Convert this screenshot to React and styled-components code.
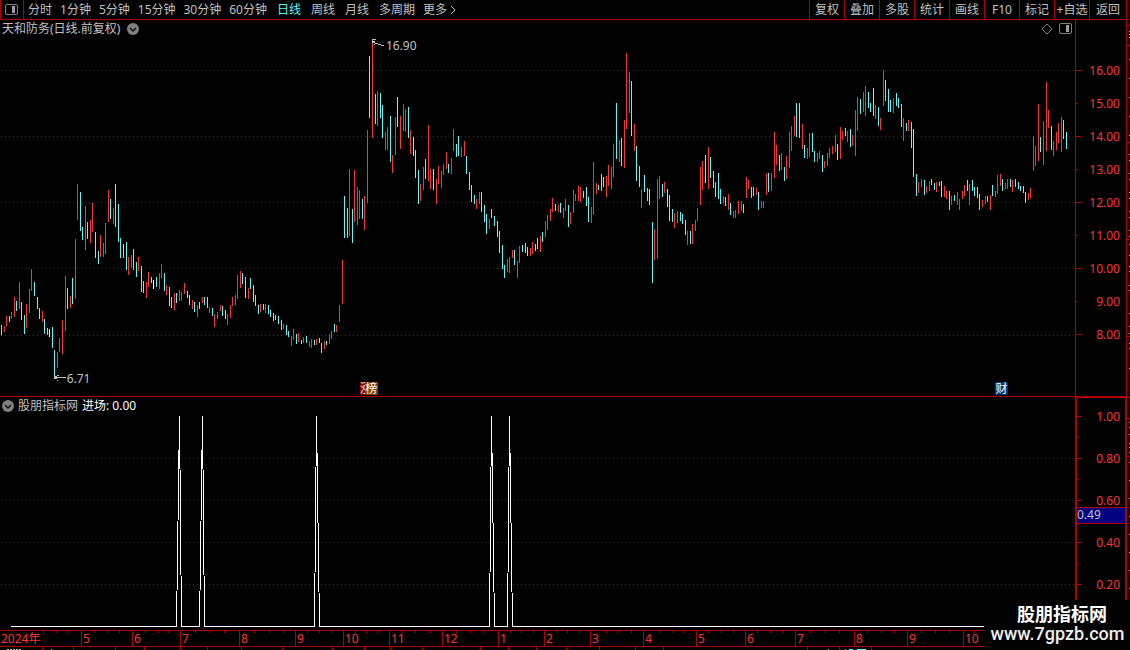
import React from 'react';
import styled, { createGlobalStyle, css } from 'styled-components';

const RED = '#b00000';
const BRIGHT_RED = '#ff3232';
const CYAN = '#54fcfc';
const GREY = '#c0c0c0';

// x, high, low for every bar, grouped by day: r = up, c = down, w = flat
const CANDLES = `
1 325 335 c,4 326 332 r,6 316 326 r,9 316 322 c,11 312 319 r,14 297 317 r,16 301 311 c,19 282 309 r,
21 302 320 c,24 315 334 c,26 304 328 r,29 289 313 r,31 269 291 r,34 282 296 c,37 297 309 c,39 308 319 c,
42 311 322 r,44 319 334 c,47 328 335 c,49 329 337 w,52 327 348 c,54 350 378 c,57 352 368 r,59 338 352 r,
62 320 354 r,65 276 331 r,67 288 309 c,70 296 308 r,72 278 304 c,75 239 299 r,77 184 220 r,80 192 231 c,
82 227 240 c,85 206 250 r,87 222 239 c,90 220 243 r,92 203 232 r,95 232 258 c,98 251 264 c,100 235 257 r,
103 243 257 r,105 223 254 r,108 190 222 r,110 199 219 c,113 208 224 r,115 184 227 c,118 204 242 c,120 238 258 c,
123 244 258 c,126 242 270 c,128 257 275 r,131 255 268 r,133 249 270 c,136 262 277 c,138 257 271 r,141 266 292 c,
143 281 293 c,146 282 298 r,148 272 287 r,151 277 283 c,153 280 289 w,156 277 287 c,159 273 289 r,161 264 278 r,
164 273 291 c,166 285 295 r,169 287 306 c,171 297 308 c,174 293 310 r,176 293 303 c,179 290 301 r,181 292 301 r,
184 283 294 r,187 291 298 c,189 295 305 c,192 300 309 r,194 302 312 c,197 305 317 r,199 302 309 c,202 297 303 r,
204 297 305 c,207 297 308 c,209 307 313 r,212 308 316 c,214 314 327 r,217 312 319 r,220 305 311 r,222 306 316 c,
225 310 319 c,227 314 325 r,230 305 318 r,232 297 306 r,235 295 305 r,237 275 299 r,240 271 288 r,242 273 284 c,
245 277 298 c,248 288 299 r,250 278 289 c,253 285 302 c,255 295 306 c,258 305 314 c,260 304 312 r,263 304 310 c,
265 304 313 r,268 305 314 c,270 310 317 c,273 313 321 c,275 315 320 c,278 316 324 c,281 320 330 c,283 324 329 r,
286 325 335 c,288 331 337 c,291 336 346 r,293 329 340 r,296 334 344 c,298 333 342 r,301 340 344 c,303 337 343 r,
306 336 343 c,309 341 347 r,311 339 348 r,314 340 345 c,316 339 345 r,319 338 343 c,321 343 353 c,324 341 349 r,
326 341 345 c,329 334 344 r,331 331 339 r,334 324 332 c,336 325 332 r,339 305 322 r,342 260 304 r,344 196 238 c,
347 208 238 c,349 169 236 r,352 209 243 c,354 170 222 r,357 187 225 r,359 190 219 r,362 199 219 c,364 196 230 r,
367 130 203 r,369 56 118 c,372 43 138 r,375 94 124 c,377 91 126 r,380 93 118 c,382 105 138 c,385 132 150 r,
387 127 150 r,390 116 162 c,392 155 173 r,395 117 155 r,397 97 127 c,400 116 149 r,403 104 131 r,405 109 132 r,
408 107 138 c,410 130 154 r,413 137 156 c,415 150 178 c,418 170 204 c,420 184 201 r,423 167 190 r,425 159 179 c,
428 125 181 r,430 169 189 r,433 169 190 c,436 179 204 r,438 166 184 r,441 171 188 r,443 164 175 r,446 152 169 r,
448 164 173 c,451 158 174 r,453 129 151 r,456 144 157 c,458 136 156 c,461 147 157 r,464 141 156 r,466 156 174 c,
469 172 190 c,471 185 202 c,474 195 204 c,476 199 209 r,479 192 204 r,481 192 212 c,484 205 222 c,486 214 234 c,
489 219 229 r,491 209 218 c,494 216 226 c,497 221 237 c,499 231 253 c,502 245 269 c,504 265 278 c,507 259 272 r,
509 257 273 r,512 250 258 r,514 250 265 c,517 261 278 r,519 246 263 r,522 245 252 c,525 243 253 c,527 247 256 c,
530 248 256 r,532 242 254 r,535 244 251 c,537 238 249 c,540 236 252 r,542 232 242 c,545 221 237 r,547 215 230 r,
550 209 221 r,552 198 212 r,555 204 211 c,558 205 212 r,560 203 213 c,563 208 218 r,565 199 211 r,568 205 227 c,
570 212 224 r,573 190 213 r,575 194 201 r,578 186 201 r,580 187 202 r,583 191 198 c,586 187 206 c,588 197 222 c,
591 207 223 r,593 162 215 r,596 183 194 r,598 185 190 c,601 174 191 c,603 177 187 c,606 176 197 r,608 165 186 r,
611 167 189 r,613 144 177 r,616 103 159 c,619 140 162 r,621 138 166 c,624 120 168 r,626 53 129 r,629 72 113 r,
631 81 136 c,634 124 151 r,636 146 181 c,639 166 187 c,641 189 208 r,644 175 192 c,647 188 201 c,649 189 205 c,
652 222 283 c,654 229 260 r,657 179 259 r,659 176 199 r,662 184 197 c,664 182 193 r,667 189 207 c,669 195 221 c,
672 209 222 c,674 213 228 r,677 211 223 r,680 212 221 c,682 214 224 c,685 220 235 c,687 231 245 r,690 231 244 c,
692 224 244 r,695 220 231 r,697 208 221 r,700 167 205 r,702 161 190 r,705 155 183 c,708 147 189 r,710 157 178 c,
713 171 188 c,715 182 197 c,718 173 199 c,720 189 204 c,723 196 203 r,725 197 206 c,728 194 210 r,730 203 215 c,
733 211 218 r,735 210 218 r,738 201 214 r,741 201 211 r,743 204 213 c,746 177 198 r,748 180 189 r,751 187 198 c,
753 187 196 c,756 188 195 r,758 192 210 c,761 201 208 r,763 201 208 r,766 173 195 r,768 173 192 c,771 173 191 r,
774 132 178 r,776 145 165 r,779 155 171 c,781 153 170 r,784 167 181 c,786 156 179 r,789 132 168 r,791 126 151 r,
794 116 136 r,796 103 137 c,799 103 138 c,802 124 149 r,804 145 158 c,807 148 159 r,809 133 157 r,812 133 152 c,
814 151 162 c,817 153 162 r,819 151 159 r,822 155 172 c,824 161 168 r,827 153 166 r,829 148 158 r,832 146 154 r,
835 135 152 r,837 144 160 c,840 127 159 r,842 131 140 r,845 128 136 c,847 131 142 r,850 129 147 c,852 135 146 r,
855 110 156 r,857 97 131 r,860 99 114 c,863 92 112 r,865 86 116 r,868 92 108 c,870 103 112 c,873 88 116 c,
875 105 119 r,878 107 126 c,880 118 130 r,883 70 106 r,885 80 101 c,888 89 112 c,890 100 112 c,893 98 113 r,
896 93 106 c,898 98 108 c,901 104 127 c,903 118 141 r,906 123 131 c,908 120 131 r,911 122 148 c,913 129 177 c,
916 174 196 c,918 182 193 r,921 179 187 r,924 180 195 c,926 186 193 r,929 181 191 r,931 179 185 c,934 183 190 c,
936 182 192 r,939 182 186 c,941 181 197 c,944 186 197 r,946 191 199 r,949 191 210 c,951 196 205 r,954 195 201 c,
957 192 205 r,959 199 210 r,962 191 199 r,964 185 196 r,967 180 191 c,969 184 205 r,972 180 191 c,974 187 196 c,
977 187 198 c,979 194 210 c,982 200 207 r,985 196 204 r,987 196 202 c,990 195 210 r,992 185 196 c,995 191 197 r,
997 175 194 r,1000 174 186 r,1002 179 191 c,1005 183 189 r,1007 179 189 r,1010 179 187 c,1012 180 192 r,1015 179 187 c,
1018 182 189 c,1020 186 191 c,1023 186 193 c,1025 192 203 c,1028 193 200 r,1030 188 198 r,1033 136 171 r,1035 146 166 r,
1038 104 161 r,1040 137 152 c,1043 121 165 r,1046 82 151 r,1048 110 128 r,1051 126 150 c,1053 141 156 r,1056 132 150 r,
1058 123 143 r,1061 117 152 r,1063 120 139 c,1066 132 149 c`
  .trim()
  .split(',')
  .map((row) => {
    const [x, high, low, kind] = row.trim().split(' ');
    return { x: Number(x), high: Number(high), low: Number(low), kind };
  });

const CANDLE_COLORS = { r: BRIGHT_RED, c: CYAN, w: '#ffffff' };

const MINUTES = ['1分钟', '5分钟', '15分钟', '30分钟', '60分钟'];
const PERIODS = ['日线', '周线', '月线', '多周期'];
const ACTIONS = ['复权', '叠加', '多股', '统计', '画线', 'F10', '标记', '+自选', '返回'];

const PRICES = ['16.00', '15.00', '14.00', '13.00', '12.00', '11.00', '10.00', '9.00', '8.00'];
const PRICE_GRID = [70, 136, 202, 268, 335];

const LEVELS = ['1.00', '', '0.80', '', '0.60', '', '0.40', '', '0.20'];
const LEVEL_GRID = [458, 500, 542, 584];

// left foot, peak, right foot of each signal
const SIGNALS = [
  [176, 179, 181],
  [199, 202, 204],
  [314, 316, 319],
  [489, 491, 494],
  [507, 509, 512],
];

const MONTHS = [
  ['2024年', 81],
  ['5', 51],
  ['6', 48],
  ['7', 59],
  ['8', 56],
  ['9', 48],
  ['10', 46],
  ['11', 53],
  ['12', 56],
  ['1', 46],
  ['2', 46],
  ['3', 53],
  ['4', 53],
  ['5', 49],
  ['6', 50],
  ['7', 59],
  ['8', 53],
  ['9', 56],
  ['10', 163],
];

const WEEK_TICKS = [
  43, 56, 68, 94, 107, 119, 145, 158, 168, 195, 210, 224, 254, 269, 283, 307, 319, 331, 355, 366,
  378, 402, 415, 430, 456, 470, 484, 510, 521, 533, 557, 567, 579, 606, 618, 631, 659, 673, 684,
  708, 721, 733, 757, 770, 782, 810, 825, 839, 867, 881, 894, 921, 935, 949, 974,
];
const MONTH_TICKS = [
  81, 132, 180, 239, 295, 343, 389, 442, 498, 544, 590, 643, 696, 745, 795, 854, 907, 963,
];
const FOOT_TICKS = [
  42, 73, 115, 144, 180, 207, 241, 282, 332, 364, 390, 422, 480, 508, 536, 566, 599, 635, 663,
  807, 839, 871,
];

const STRIP_RED = [25, 45, 142, 239, 336, 397, 418, 456];
const STRIP_WHITE = [
  31, 34, 37, 59, 78, 97, 116, 135, 154, 160, 173, 179, 192, 198, 211, 217, 230, 236, 244, 255,
  266, 271, 285, 290, 313, 326, 333, 343, 348, 368, 422, 427, 434, 443, 447, 452, 462, 480, 498,
  516, 534, 552, 570, 588,
];

const GlobalStyle = createGlobalStyle`
  * {
    box-sizing: border-box;
  }

  body {
    margin: 0;
    background: #000;
    color: ${GREY};
    font-family: 'Noto Sans', 'Noto Sans CJK SC', sans-serif;
    font-size: 12px;
    line-height: 16px;
  }

  svg {
    display: block;
  }
`;

const Page = styled.div`
  position: relative;
  display: flex;
  height: 100vh;
  min-height: 480px;
  overflow: hidden;
`;

const Terminal = styled.main`
  flex: 1;
  min-width: 0;
  display: grid;
  grid-template-rows: 20px minmax(0, 377fr) minmax(0, 233fr) 20px;
  border-right: 1px solid ${RED};
`;

const SideStrip = styled.svg`
  width: 3px;
  height: 100%;
`;

const Toolbar = styled.nav`
  display: flex;
  align-items: stretch;
  border-bottom: 1px solid ${RED};
  white-space: nowrap;
`;

const BareButton = styled.button`
  padding: 0;
  border: 0;
  background: none;
  color: inherit;
  font: inherit;
  cursor: pointer;
`;

const LayoutButton = styled(BareButton)`
  display: flex;
  align-items: center;
  width: 24px;
  padding-left: 4px;
  border-left: 1px solid ${RED};
  border-right: 1px solid ${RED};
`;

const Tabs = styled.div`
  flex: 1;
  display: flex;
  align-items: center;
  gap: 10px;
  padding-left: 4px;
`;

const MinuteTabs = styled.div`
  display: flex;
  align-items: center;
  gap: 8px;
`;

const Tab = styled(BareButton)`
  display: flex;
  align-items: center;
  gap: 3px;
  color: ${(props) => (props.$active ? CYAN : GREY)};
`;

const MoreTab = styled(Tab)`
  margin-left: -2px;
`;

const Actions = styled.div`
  display: flex;
`;

const Action = styled(BareButton)`
  width: 35px;
  border-left: 1px solid ${RED};

  &:last-child {
    width: 37px;
  }
`;

const Panel = styled.section`
  display: grid;
  grid-template-columns: minmax(0, 1fr) 51px;
  min-height: 0;
`;

const PricePanel = styled(Panel)`
  border-bottom: 1px solid ${RED};
`;

const ChartColumn = styled.div`
  display: flex;
  flex-direction: column;
  min-height: 0;
`;

const ChartHeader = styled.header`
  display: flex;
  align-items: center;
  gap: ${(props) => props.$gap}px;
  height: ${(props) => props.$height}px;
  padding: 0 3px 0 2px;
`;

const ChartTitle = styled.h2`
  margin: 0;
  font-size: 12px;
  font-weight: 400;
`;

const Reading = styled.span`
  color: #fff;
`;

const HeaderTools = styled.div`
  display: flex;
  align-items: center;
  gap: 6px;
  margin-left: auto;
`;

const Plot = styled.div`
  position: relative;
  flex: 1;
  min-height: 0;
`;

const PlotSvg = styled.svg`
  width: 100%;
  height: 100%;
  shape-rendering: crispEdges;
`;

const Callout = styled.span`
  position: absolute;
  left: ${(props) => props.$left}%;
  top: ${(props) => props.$top}%;
`;

const Badges = styled.div`
  position: absolute;
  left: ${(props) => props.$left}%;
  bottom: 1px;
  display: flex;
`;

const Badge = styled.span`
  width: 13px;
  height: 13px;
  background: ${(props) => props.$color};
  color: #fff;
  line-height: 13px;
`;

const CoveredBadge = styled(Badge)`
  width: 5px;
  overflow: hidden;
`;

const Axis = styled.div`
  display: grid;
  color: ${BRIGHT_RED};
  ${(props) =>
    props.$focused
      ? css`
          position: relative;
          grid-template-rows: 8fr repeat(9, 21fr) 35fr;
          border: solid ${RED};
          border-width: 1px 1px 0 2px;
        `
      : css`
          grid-template-rows: 34fr repeat(9, 33fr) 45fr;
          padding-right: 1px;
          border-left: 1px solid ${RED};
        `}
`;

const AxisRow = styled.div`
  display: flex;
  align-items: center;
  justify-content: space-between;
  min-height: 0;
  padding-right: 5px;

  &::before {
    content: '';
    width: ${(props) => (props.$major ? 5 : 2)}px;
    height: 1px;
    background: ${RED};
  }
`;

const Cursor = styled.output`
  position: absolute;
  left: 0;
  right: 0;
  top: 47%;
  height: 17px;
  border: solid ${RED};
  border-width: 1px 0;
  background: #000080;
  color: ${GREY};
  line-height: 14px;
`;

const Footer = styled.footer`
  border-top: 1px solid ${RED};
`;

const TickStrip = styled.svg`
  width: 100%;
  height: 3px;
  shape-rendering: crispEdges;
`;

const TimeAxis = styled.div`
  display: grid;
  grid-template-columns: ${MONTHS.map(([, width]) => `minmax(0, ${width}fr)`).join(' ')};
  height: 13px;
  border-bottom: 1px solid ${RED};
  color: ${BRIGHT_RED};
  line-height: 10px;
`;

const Month = styled.span`
  padding-left: 1px;
  border-left: 1px solid ${RED};

  &:first-child {
    padding-left: 0;
    border-left-color: transparent;
  }
`;

const Watermark = styled.aside`
  position: absolute;
  right: 0;
  bottom: 0;
  width: 146px;
  height: 50px;
  padding: 5px 0 0 10px;
  background: #020202;
  color: #fff;
  font-family: Roboto, 'Noto Sans CJK SC', sans-serif;
  font-size: 18px;
  line-height: 19px;
  text-align: center;
`;

const SiteName = styled.strong`
  display: block;
  font-weight: 700;
`;

const SiteLink = styled.a`
  display: block;
  margin-left: -9px;
  color: #eee;
  font-weight: 500;
  text-decoration: none;
`;

const PanelIcon = () => (
  <svg width="13" height="12" viewBox="0 0 13 12" fill="none">
    <rect x="0.5" y="0.5" width="12" height="10" rx="1.5" stroke="#808080" />
    <rect x="7" y="2" width="3" height="7" fill="#a0a0a0" />
  </svg>
);

const DiamondIcon = () => (
  <svg width="12" height="12" viewBox="0 0 12 12" fill="none">
    <path d="M6 1L11 6L6 11L1 6Z" stroke="#808080" />
  </svg>
);

const ChevronIcon = () => (
  <svg width="6" height="10" viewBox="0 0 6 10" fill="none">
    <path d="M1 1L5 5L1 9" stroke={GREY} />
  </svg>
);

const DropIcon = () => (
  <svg width="12" height="12" viewBox="0 0 12 12" fill="none">
    <circle cx="6" cy="6" r="6" fill="#808080" />
    <path d="M3 5L6 8L9 5" stroke="#101010" strokeWidth="1.5" />
  </svg>
);

const GridLines = ({ rows }) =>
  rows.map((y) => (
    <line key={y} x1="1" x2="1075" y1={y + 0.5} y2={y + 0.5} stroke={RED} strokeDasharray="1 3" />
  ));

const signalPoints = [
  '11,626.5',
  ...SIGNALS.map(
    ([left, peak, right]) => `${left + 0.5},626.5 ${peak + 0.5},416 ${right + 0.5},626.5`
  ),
  '1067,626.5',
].join(' ');

const TopBar = () => (
  <Toolbar>
    <LayoutButton aria-label="布局">
      <PanelIcon />
    </LayoutButton>
    <Tabs>
      <MinuteTabs>
        <Tab>分时</Tab>
        {MINUTES.map((name) => (
          <Tab key={name}>{name}</Tab>
        ))}
      </MinuteTabs>
      {PERIODS.map((name) => (
        <Tab key={name} $active={name === '日线'}>
          {name}
        </Tab>
      ))}
      <MoreTab>
        更多
        <ChevronIcon />
      </MoreTab>
    </Tabs>
    <Actions>
      {ACTIONS.map((name) => (
        <Action key={name}>{name}</Action>
      ))}
    </Actions>
  </Toolbar>
);

const PriceChart = () => (
  <PricePanel>
    <ChartColumn>
      <ChartHeader $height={18} $gap={7}>
        <ChartTitle>天和防务(日线.前复权)</ChartTitle>
        <BareButton aria-label="展开">
          <DropIcon />
        </BareButton>
        <HeaderTools>
          <BareButton aria-label="标注">
            <DiamondIcon />
          </BareButton>
          <BareButton aria-label="侧栏">
            <PanelIcon />
          </BareButton>
        </HeaderTools>
      </ChartHeader>
      <Plot>
        <PlotSvg viewBox="0 38 1075 358" preserveAspectRatio="none">
          <GridLines rows={PRICE_GRID} />
          {CANDLES.map(({ x, high, low, kind }) => (
            <rect key={x} x={x} y={high} width="1" height={low - high} fill={CANDLE_COLORS[kind]} />
          ))}
          <path
            d="M384 45.5H381M381 44.5H378M378 43.5H375M375 42.5H373M372.5 40V43M372 39.5H376M373 41.5H375M374 44.5H375"
            stroke={GREY}
          />
          <path
            d="M54 377.5H66M55 376.5H57M57 375.5H59M55 378.5H57M57 380.5H58M54.5 376V379"
            stroke={GREY}
          />
        </PlotSvg>
        <Callout $left={35.9} $top={0}>
          16.90
        </Callout>
        <Callout $left={6.2} $top={93}>
          6.71
        </Callout>
        <Badges $left={33.5}>
          <CoveredBadge $color="#800000">涨</CoveredBadge>
          <Badge $color="#804000">榜</Badge>
        </Badges>
        <Badges $left={92.6}>
          <Badge $color="#003870">财</Badge>
        </Badges>
      </Plot>
    </ChartColumn>
    <Axis>
      <span />
      {PRICES.map((price, i) => (
        <AxisRow key={price} $major={i % 2 === 0}>
          {price}
        </AxisRow>
      ))}
    </Axis>
  </PricePanel>
);

const SignalChart = () => (
  <Panel>
    <ChartColumn>
      <ChartHeader $height={17} $gap={4}>
        <BareButton aria-label="展开指标">
          <DropIcon />
        </BareButton>
        <ChartTitle>股朋指标网</ChartTitle>
        <Reading>进场: 0.00</Reading>
      </ChartHeader>
      <Plot>
        <PlotSvg viewBox="0 414 1075 216" preserveAspectRatio="none">
          <GridLines rows={LEVEL_GRID} />
          <polyline points={signalPoints} fill="none" stroke="#fff" strokeLinejoin="bevel" />
        </PlotSvg>
      </Plot>
    </ChartColumn>
    <Axis $focused>
      <span />
      {LEVELS.map((level, i) => (
        <AxisRow key={i} $major={level !== ''}>
          {level}
        </AxisRow>
      ))}
      <Cursor>0.49</Cursor>
    </Axis>
  </Panel>
);

const Timeline = () => (
  <Footer>
    <TickStrip viewBox="0 0 1126 3" preserveAspectRatio="none">
      {WEEK_TICKS.map((x) => (
        <rect key={x} x={x} y="0" width="1" height="2" fill={RED} />
      ))}
      {MONTH_TICKS.map((x) => (
        <rect key={x} x={x} y="0" width="1" height="3" fill={RED} />
      ))}
    </TickStrip>
    <TimeAxis>
      {MONTHS.map(([name], i) => (
        <Month key={i}>{name}</Month>
      ))}
    </TimeAxis>
    <TickStrip viewBox="0 0 1126 3" preserveAspectRatio="none">
      {FOOT_TICKS.map((x) => (
        <rect key={x} x={x} y="0" width="1" height="3" fill={RED} />
      ))}
      <path d="M7 2.5H22M51 2.5H52M828 2.5H829M845 2.5H846" stroke={GREY} strokeDasharray="2 1" />
      <path d="M849 2.5H853M857 2.5H866" stroke={CYAN} />
    </TickStrip>
  </Footer>
);

const App = () => (
  <Page>
    <GlobalStyle />
    <Terminal>
      <TopBar />
      <PriceChart />
      <SignalChart />
      <Timeline />
    </Terminal>
    <SideStrip viewBox="0 0 3 650" preserveAspectRatio="none" shapeRendering="crispEdges">
      {STRIP_RED.map((y) => (
        <rect key={y} x="0" y={y} width="3" height="1" fill={RED} />
      ))}
      {STRIP_WHITE.map((y) => (
        <rect key={y} x="2" y={y} width="1" height="1" fill={GREY} />
      ))}
    </SideStrip>
    <Watermark>
      <SiteName>股朋指标网</SiteName>
      <SiteLink href="#">www.7gpzb.com</SiteLink>
    </Watermark>
  </Page>
);

export default App;
